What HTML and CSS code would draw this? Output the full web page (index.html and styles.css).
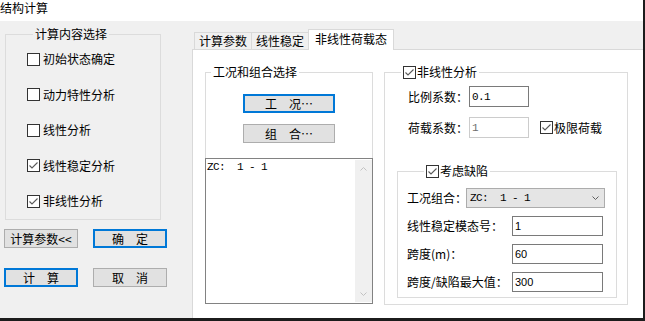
FILE: index.html
```html
<!DOCTYPE html>
<html lang="zh-CN">
<head>
  <meta charset="UTF-8" />
  <title>结构计算</title>
  <link rel="stylesheet" href="styles.css">
</head>
<body>
  <div class="window">
    <div class="titlebar">结构计算</div>
    <div class="main">
      <div class="side">
        <fieldset class="group content-group">
          <legend>计算内容选择</legend>
          <label class="check"><span class="box"></span>初始状态确定</label>
          <label class="check"><span class="box"></span>动力特性分析</label>
          <label class="check"><span class="box"></span>线性分析</label>
          <label class="check"><span class="box"><svg width="11" height="11" viewBox="0 0 11 11"><path d="M1.5 5.5 L4 8 L9.5 2.5" fill="none" stroke="#5a5a5a" stroke-width="1.1"/></svg></span>线性稳定分析</label>
          <label class="check"><span class="box"><svg width="11" height="11" viewBox="0 0 11 11"><path d="M1.5 5.5 L4 8 L9.5 2.5" fill="none" stroke="#5a5a5a" stroke-width="1.1"/></svg></span>非线性分析</label>
        </fieldset>
        <div class="side-buttons">
          <button class="btn">计算参数&lt;&lt;</button>
          <button class="btn default">确　定</button>
          <button class="btn default">计　算</button>
          <button class="btn">取　消</button>
        </div>
      </div>

      <div class="tabs">
        <div class="tabbar">
          <div class="tab">计算参数</div>
          <div class="tab">线性稳定</div>
          <div class="tab active">非线性荷载态</div>
        </div>
        <div class="panel">
          <div class="col-left">
            <fieldset class="group case-group">
              <legend>工况和组合选择</legend>
              <button class="btn default wide">工　况…</button>
              <button class="btn wide">组　合…</button>
            </fieldset>
            <div class="listbox">
              <div class="list-text">ZC:  1 - 1</div>
              <div class="vscroll">
                <svg width="7" height="4" viewBox="0 0 7 4"><path d="M0.5 3.5 L3.5 0.5 L6.5 3.5" fill="none" stroke="#c2c2c2"/></svg>
                <svg width="7" height="4" viewBox="0 0 7 4"><path d="M0.5 0.5 L3.5 3.5 L6.5 0.5" fill="none" stroke="#c2c2c2"/></svg>
              </div>
            </div>
          </div>

          <fieldset class="group nl-group">
            <legend><span class="check"><span class="box"><svg width="11" height="11" viewBox="0 0 11 11"><path d="M1.5 5.5 L4 8 L9.5 2.5" fill="none" stroke="#5a5a5a" stroke-width="1.1"/></svg></span>非线性分析</span></legend>
            <div class="nl-rows">
              <div class="field">
                <span class="field-label short">比例系数：</span>
                <input class="input small mono" value="0.1" readonly>
              </div>
              <div class="field">
                <span class="field-label short">荷载系数：</span>
                <input class="input small mono" value="1" disabled>
                <span class="check limit"><span class="box"><svg width="11" height="11" viewBox="0 0 11 11"><path d="M1.5 5.5 L4 8 L9.5 2.5" fill="none" stroke="#5a5a5a" stroke-width="1.1"/></svg></span>极限荷载</span>
              </div>
            </div>
            <fieldset class="group defect-group">
              <legend><span class="check"><span class="box"><svg width="11" height="11" viewBox="0 0 11 11"><path d="M1.5 5.5 L4 8 L9.5 2.5" fill="none" stroke="#5a5a5a" stroke-width="1.1"/></svg></span>考虑缺陷</span></legend>
              <div class="field tight">
                <span class="field-label combo-label">工况组合：</span>
                <div class="combo">
                  <span class="mono">ZC:  1 - 1</span>
                  <svg width="7" height="4" viewBox="0 0 7 4"><path d="M0.5 0.5 L3.5 3.5 L6.5 0.5" fill="none" stroke="#606060"/></svg>
                </div>
              </div>
              <div class="field tight">
                <span class="field-label long">线性稳定模态号：</span>
                <input class="input wide-input" value="1" readonly>
              </div>
              <div class="field tight">
                <span class="field-label long">跨度(m)：</span>
                <input class="input wide-input" value="60" readonly>
              </div>
              <div class="field tight">
                <span class="field-label long">跨度/缺陷最大值：</span>
                <input class="input wide-input" value="300" readonly>
              </div>
            </fieldset>
          </fieldset>
        </div>
      </div>
    </div>
  </div>
</body>
</html>
```

FILE: styles.css
```css
* {
  box-sizing: border-box;
}
body {
  margin: 0;
  width: 645px;
  height: 321px;
  overflow: hidden;
  background: #1c1c1c;
  font-family: "Noto Sans CJK SC", "Noto Sans", sans-serif;
  font-size: 12px;
  color: #000;
}
.window {
  width: 643px;
  height: 318px;
  background: #f0f0f0;
  display: flex;
  flex-direction: column;
}
.titlebar {
  height: 21px;
  background: #fff;
  line-height: 14px;
  padding-top: 1px;
  white-space: nowrap;
}
.main {
  flex: 1;
  display: flex;
}
.side {
  width: 192px;
  flex: none;
}

/* group boxes */
.group {
  margin: 0;
  padding: 0;
  border: 1px solid #dcdcdc;
  min-width: 0;
}
.group > legend {
  padding: 0 2px;
  height: 14px;
  line-height: 14px;
}
.content-group {
  width: 156px;
  height: 193px;
  margin: 6px 0 0 5px;
  padding: 11px 0 0 21px;
  display: flex;
  flex-direction: column;
  gap: 21.5px;
}
.content-group > legend {
  margin-left: 6px;
}

/* checkboxes */
.check {
  display: flex;
  align-items: center;
  height: 14px;
  line-height: 14px;
  white-space: nowrap;
}
.box {
  width: 13px;
  height: 13px;
  border: 1px solid #333;
  background: #fff;
  margin-right: 3px;
  flex: none;
  display: flex;
}
.group > legend .box {
  margin-right: 1px;
}

/* buttons */
.side-buttons {
  display: grid;
  grid-template-columns: 74px 74px;
  grid-template-rows: 19px 19px;
  column-gap: 15px;
  row-gap: 20px;
  margin: 9px 0 0 4px;
}
.btn {
  font: inherit;
  height: 19px;
  padding: 0;
  border: 1px solid #adadad;
  background: #e1e1e1;
  color: #000;
  line-height: 15px;
  white-space: nowrap;
}
.btn.default {
  border: 2px solid #0078d7;
}
.btn.wide {
  width: 92px;
}

/* tabs */
.tabs {
  flex: 1;
  display: flex;
  flex-direction: column;
}
.tabbar {
  height: 28px;
  flex: none;
  display: flex;
  align-items: flex-end;
  padding-left: 2px;
}
.tab {
  height: 17px;
  padding: 0 4px;
  border: 1px solid #d9d9d9;
  border-bottom: none;
  line-height: 15px;
  background: #f0f0f0;
}
.tab + .tab {
  margin-left: -1px;
}
.tab.active {
  height: 21px;
  margin-bottom: -1px;
  padding: 0 6px;
  background: #fff;
  line-height: 18px;
  position: relative;
  z-index: 1;
}
.panel {
  flex: 1;
  background: #fff;
  border-top: 1px solid #d9d9d9;
  border-left: 1px solid #d9d9d9;
  display: flex;
  align-items: flex-start;
  gap: 11px;
  padding: 15px 0 0 12px;
}

/* left column of the tab */
.col-left {
  width: 168px;
  flex: none;
}
.case-group {
  width: 168px;
  border-bottom: none;
  padding: 15px 0;
  display: flex;
  flex-direction: column;
  align-items: center;
  gap: 11px;
}
.case-group > legend {
  margin-left: 5px;
}
.listbox {
  height: 146px;
  border: 1px solid #828282;
  display: flex;
  padding: 1px 0;
}
.list-text {
  flex: 1;
  padding-left: 1px;
  font-family: "Liberation Mono", "DejaVu Sans Mono", monospace;
  font-size: 11px;
  letter-spacing: -0.6px;
  line-height: 14px;
  white-space: pre;
}
.vscroll {
  width: 17px;
  background: #f0f0f0;
  display: flex;
  flex-direction: column;
  align-items: center;
  justify-content: space-between;
  padding: 7px 0 6px;
}
.mono {
  font-family: "Liberation Mono", "DejaVu Sans Mono", monospace;
  font-size: 11px;
  letter-spacing: -0.6px;
  white-space: pre;
}

/* nonlinear group */
.nl-group {
  width: 244px;
  height: 240px;
  flex: none;
  padding: 7px 0 0 12px;
}
.nl-group > legend {
  margin-left: 4px;
}
.nl-rows {
  padding-left: 11px;
}
.field {
  display: flex;
  align-items: center;
  height: 21px;
  white-space: nowrap;
}
.field + .field {
  margin-top: 10px;
}
.field-label {
  flex: none;
  line-height: 14px;
}
.field-label.short {
  width: 61px;
}
.field-label.combo-label {
  width: 59px;
}
.field-label.long {
  width: 105px;
}
.input {
  height: 21px;
  margin: 0;
  padding: 0 2px;
  border: 1px solid #7a7a7a;
  background: #fff;
  color: #000;
  font-family: "Liberation Sans", Arial, sans-serif;
  font-size: 11px;
  outline: none;
}
.input.small {
  width: 60px;
  font-family: "Liberation Mono", "DejaVu Sans Mono", monospace;
}
.input:disabled {
  border-color: #cccccc;
  color: #6d6d6d;
  background: #fff;
}
.check.limit {
  margin-left: 11px;
}
.check.limit .box {
  margin-right: 1px;
}

/* defect group */
.defect-group {
  width: 220px;
  height: 134px;
  margin-top: 26px;
  padding: 10px 0 0 9px;
}
.defect-group > legend {
  margin-left: 17px;
}
.field.tight {
  height: 20px;
}
.field.tight + .field.tight {
  margin-top: 8px;
}
.combo {
  width: 139px;
  height: 20px;
  border: 1px solid #acacac;
  background: #e5e5e5;
  display: flex;
  align-items: center;
  justify-content: space-between;
  padding: 0 5px 0 3px;
}
.wide-input {
  width: 91px;
  height: 20px;
}
```
